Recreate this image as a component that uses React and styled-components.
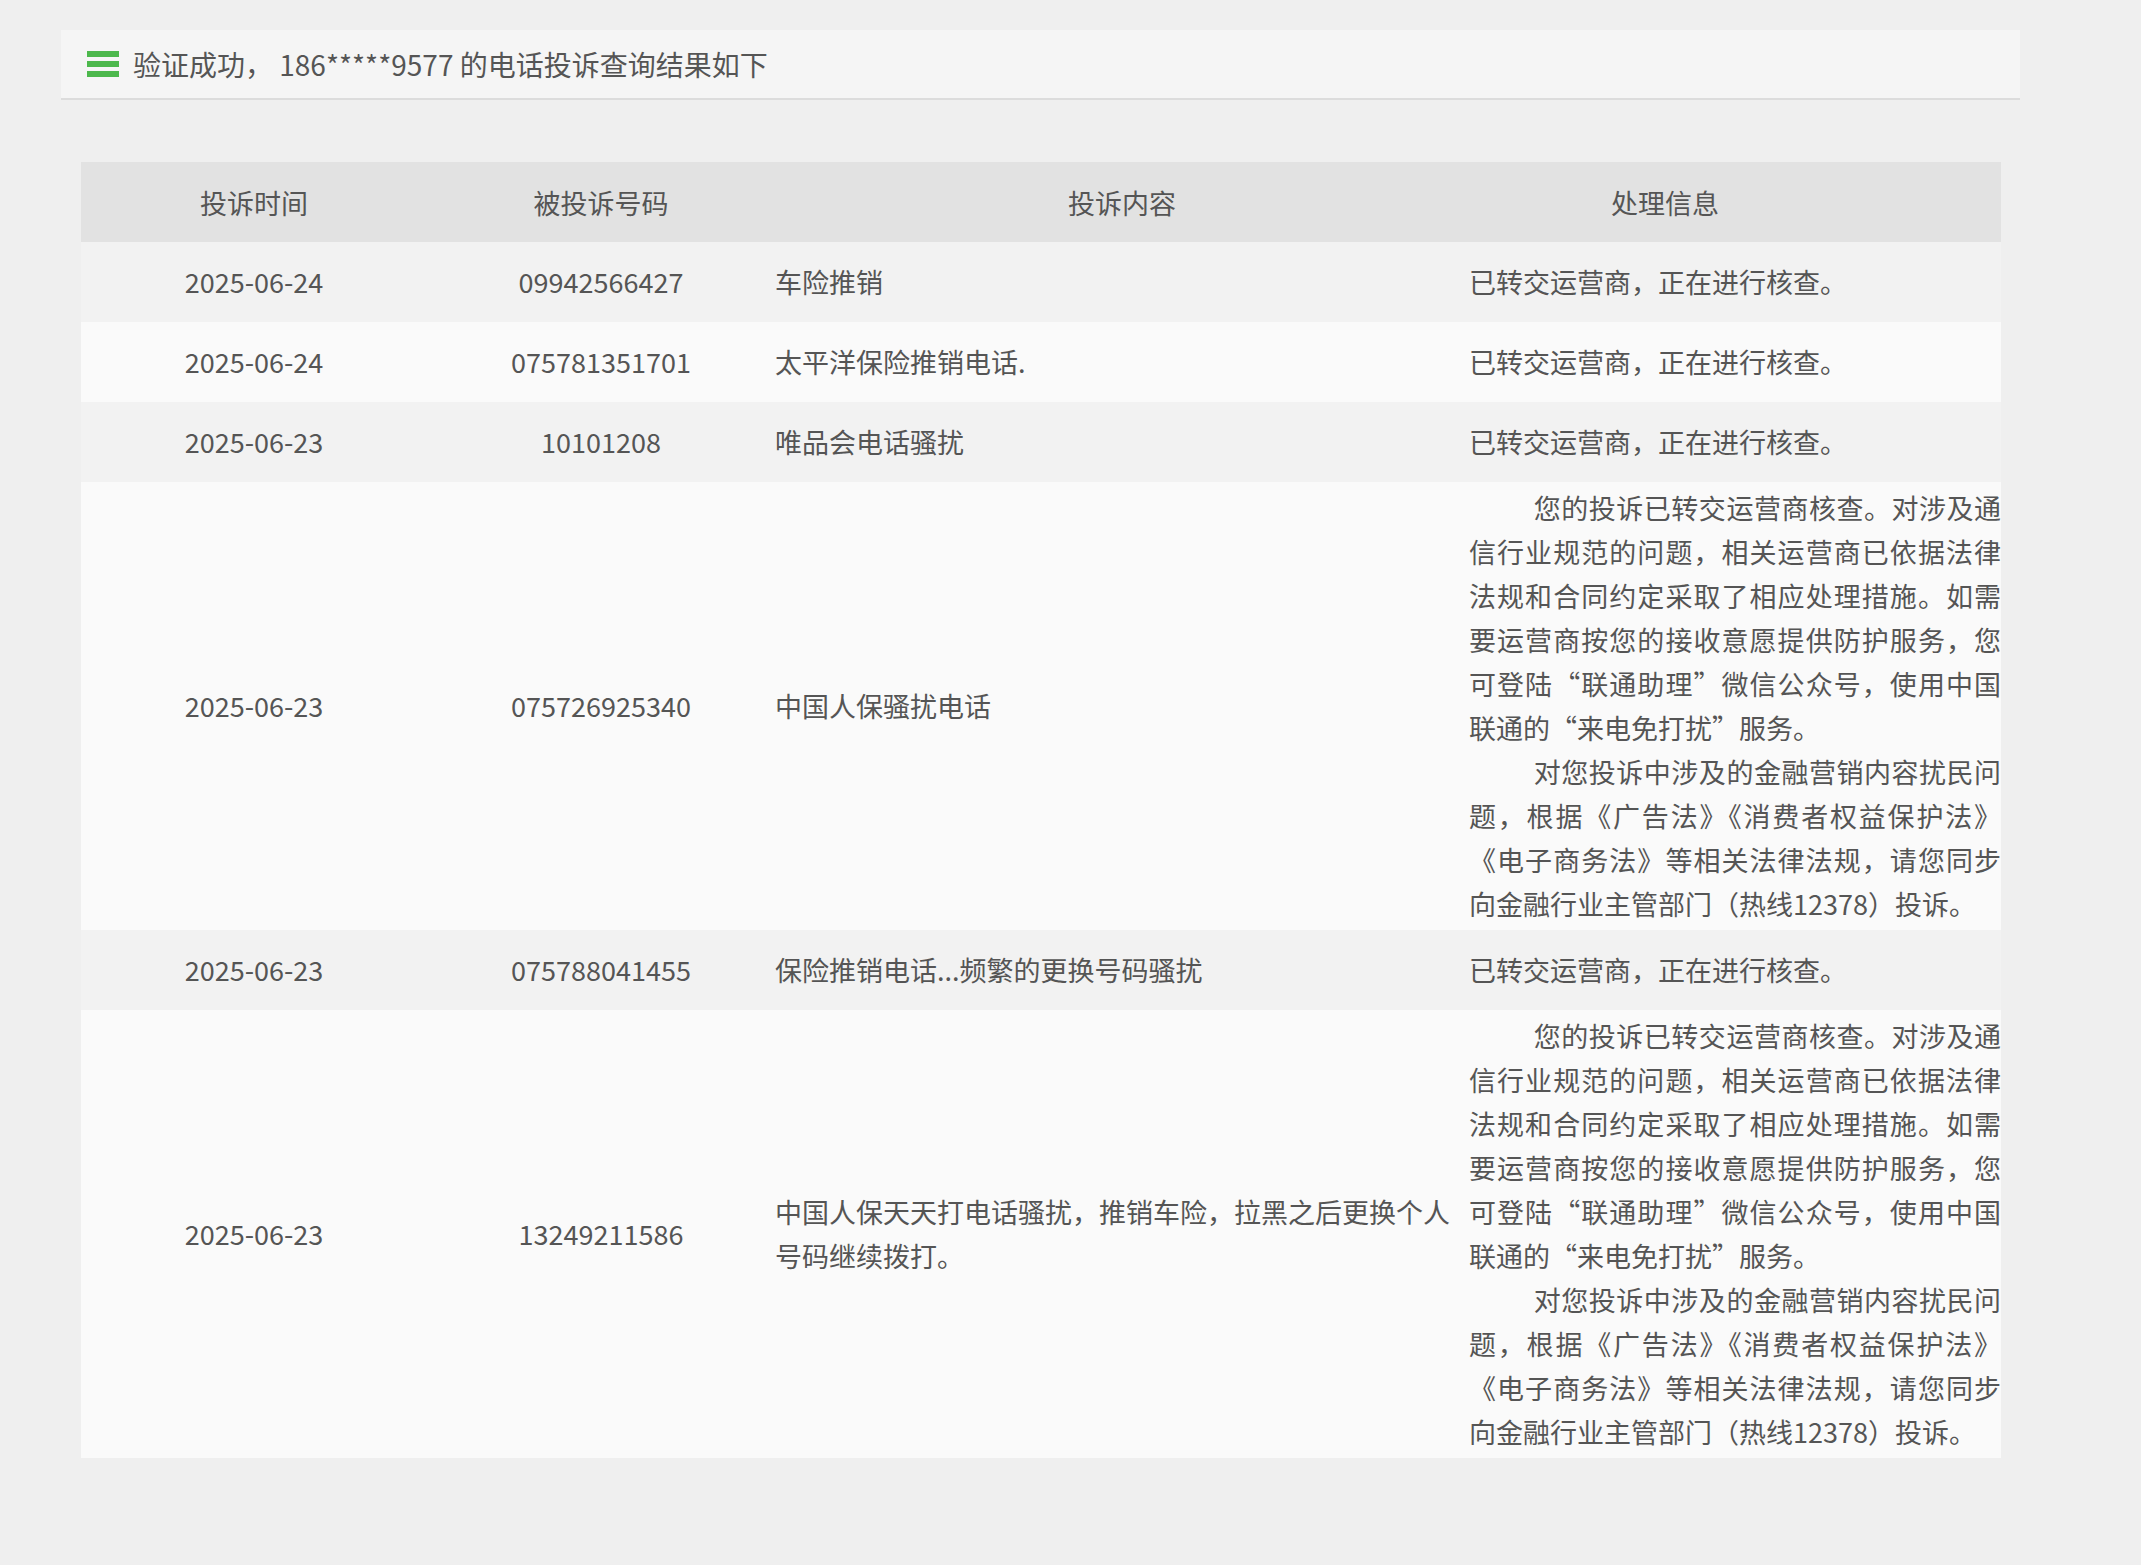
import React from "react";
import styled, { createGlobalStyle } from "styled-components";

const Global = createGlobalStyle`
  body {
    margin: 0;
    background: #efefef;
    font-family: "Noto Sans CJK SC", "Noto Sans", sans-serif;
    color: #555;
  }
`;

const Page = styled.div`
  padding: 30px 121px 40px 61px;
`;

const Banner = styled.div`
  display: flex;
  align-items: center;
  gap: 14px;
  height: 68px;
  padding-left: 26px;
  background: #f5f5f5;
  border-bottom: 2px solid #dcdcdc;
  font-size: 28px;
`;

const TableWrap = styled.div`
  margin: 62px 20px 0 20px;
`;

const Table = styled.table`
  width: 1920px;
  border-collapse: collapse;
  table-layout: fixed;
  font-size: 27px;
`;

const Th = styled.th`
  box-sizing: border-box;
  height: 80px;
  padding: 0 ${(p) => (p.$pr ? "140px" : "0")} 0 0;
  background: #e2e2e2;
  font-weight: normal;
  text-align: center;
`;

const Tr = styled.tr`
  background: ${(p) => (p.$odd ? "#f2f2f2" : "#fafafa")};
`;

const Td = styled.td`
  box-sizing: border-box;
  height: 80px;
  text-align: ${(p) => (p.$left ? "left" : "center")};
  padding: ${(p) => (p.$left ? "4px 0 4px 0" : "0")};
  line-height: 44px;
  vertical-align: middle;
`;

const Para = styled.p`
  margin: 0;
  text-indent: 2.4em;
  text-align: justify;
`;

const MenuIcon = () => (
  <svg width="32" height="26" viewBox="0 0 32 26">
    <rect y="0" width="32" height="6" fill="#4cb84c" />
    <rect y="10" width="32" height="6" fill="#4cb84c" />
    <rect y="20" width="32" height="6" fill="#4cb84c" />
  </svg>
);

const LONG = [
  "您的投诉已转交运营商核查。对涉及通信行业规范的问题，相关运营商已依据法律法规和合同约定采取了相应处理措施。如需要运营商按您的接收意愿提供防护服务，您可登陆“联通助理”微信公众号，使用中国联通的“来电免打扰”服务。",
  "对您投诉中涉及的金融营销内容扰民问题，根据《广告法》《消费者权益保护法》《电子商务法》等相关法律法规，请您同步向金融行业主管部门（热线12378）投诉。",
];
const SHORT = "已转交运营商，正在进行核查。";

const rows = [
  ["2025-06-24", "09942566427", "车险推销", false],
  ["2025-06-24", "075781351701", "太平洋保险推销电话.", false],
  ["2025-06-23", "10101208", "唯品会电话骚扰", false],
  ["2025-06-23", "075726925340", "中国人保骚扰电话", true],
  ["2025-06-23", "075788041455", "保险推销电话...频繁的更换号码骚扰", false],
  ["2025-06-23", "13249211586", "中国人保天天打电话骚扰，推销车险，拉黑之后更换个人号码继续拨打。", true],
];

export default function App() {
  return (
    <Page>
      <Global />
      <Banner>
        <MenuIcon />
        <span>验证成功， 186*****9577 的电话投诉查询结果如下</span>
      </Banner>
      <TableWrap>
        <Table>
          <colgroup>
            <col style={{ width: 346 }} />
            <col style={{ width: 348 }} />
            <col style={{ width: 694 }} />
            <col style={{ width: 532 }} />
          </colgroup>
          <thead>
            <tr>
              <Th>投诉时间</Th>
              <Th>被投诉号码</Th>
              <Th>投诉内容</Th>
              <Th $pr>处理信息</Th>
            </tr>
          </thead>
          <tbody>
            {rows.map(([d, n, c, long], i) => (
              <Tr key={i} $odd={i % 2 === 0}>
                <Td>{d}</Td>
                <Td>{n}</Td>
                <Td $left>{c}</Td>
                <Td $left>
                  {long ? LONG.map((t, j) => <Para key={j}>{t}</Para>) : SHORT}
                </Td>
              </Tr>
            ))}
          </tbody>
        </Table>
      </TableWrap>
    </Page>
  );
}
